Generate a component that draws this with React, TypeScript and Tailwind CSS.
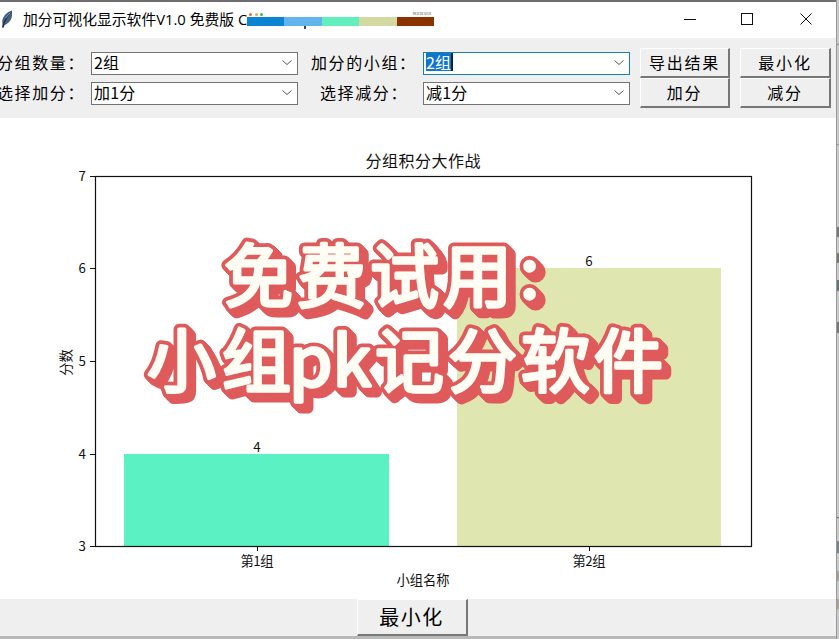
import clsx from "clsx";

const BARS = [
  { name: "第1组", value: 4, x: 124, width: 265, tick: 257, color: "#5cf1c3" },
  { name: "第2组", value: 6, x: 457, width: 264, tick: 589, color: "#dfe6b0" },
];

const TICKS = [7, 6, 5, 4, 3];

const PALETTE = ["bg-[#0b84d2]", "bg-[#61b4ec]", "bg-[#63efbd]", "bg-[#d4d9a2]", "bg-[#8b3302]"];

// chart starts right under the toolbar, so the svg origin sits at y = 118
const yFor = (score: number) => Math.floor(428.6 - (score - 3) * 92.6);

function Feather() {
  return (
    <svg className="h-5 w-3.5 shrink-0" viewBox="0 0 14 20">
      <path d="M12 .5C7 2 2.6 6 2.2 11.5l.3 3-.5 3h1.6l.9-2.3C8.5 13.5 12 9.5 12 5.5Z" fill="#48607f" />
      <path d="M11 2C8 5 5 9 2.7 17.5" stroke="#1c2f4c" strokeWidth="1.2" fill="none" />
      <path d="M10.5 2.5 5.5 8" stroke="#8ea5bf" strokeWidth="1" />
    </svg>
  );
}

function TitleBar() {
  return (
    <header className="relative flex h-[38px] shrink-0 items-center border-t-2 border-[#6f6d6f] bg-white">
      <Feather />
      <h1 className="mb-0.5 ml-[9px] font-['Open_Sans','Noto_Sans_CJK_SC',sans-serif] text-[14.8px] leading-5 whitespace-pre text-black">
        加分可视化显示软件V1.0 免费版 C
      </h1>
      <div className="ml-auto flex items-center pr-[23px] pb-0.5">
        <svg className="h-4 w-[130px]" viewBox="0 0 130 16" fill="none" stroke="#111" shapeRendering="crispEdges">
          <path d="M1 8.5h12" />
          <rect x="58.5" y="2.5" width="11" height="11" />
          <path d="m117.5 2.5 11 11m0-11-11 11" shapeRendering="auto" />
        </svg>
      </div>
      <div className="absolute top-[9px] left-[247px] w-[187px]">
        <div className="flex h-[6px] items-center gap-[2.5px] pl-0.5">
          <i className="h-[3px] w-[3px] rounded-full bg-[#e66b43]" />
          <i className="h-[3px] w-[3px] rounded-full bg-[#e0b040]" />
          <i className="h-[3px] w-[3px] rounded-full bg-[#49b35b]" />
          <span className="mr-[3px] ml-auto text-[3.2px] leading-none text-[#555]">RED DESIGN</span>
        </div>
        <div className="flex h-[9px]">
          {PALETTE.map((color) => (
            <span key={color} className={clsx("flex-1", color)} />
          ))}
        </div>
        <i className="absolute top-[15px] left-[57px] h-[3px] w-[2px] bg-[#1f4d78]" />
      </div>
    </header>
  );
}

function Combo({ value, active }: { value: string; active?: boolean }) {
  return (
    <div
      className={clsx(
        "flex h-[23px] w-[207px] items-center border bg-white pr-1 pl-0.5",
        active ? "border-[#1b7fae]" : "border-[#747474]"
      )}
    >
      <span
        className={clsx(
          "mb-0.5 text-base leading-[18px] tracking-[0.2px]",
          active && "border-r-2 border-[#07264a] bg-[#0f76cc] text-white"
        )}
      >
        {value}
      </span>
      <svg className="ml-auto h-3 w-3" viewBox="0 0 12 12" fill="none" stroke="#555">
        <path d="m1.5 3.5 4.5 4 4.5-4" />
      </svg>
    </div>
  );
}

function TkButton({ label, className }: { label: string; className?: string }) {
  return (
    <button
      className={clsx(
        "flex items-center justify-center border-t border-r-2 border-b-2 border-l border-t-white border-r-[#777] border-b-[#777] border-l-white bg-[#efefef] text-black",
        className
      )}
    >
      {label}
    </button>
  );
}

function Toolbar() {
  const label = "pb-0.5 text-base leading-5 tracking-[1.6px] whitespace-nowrap";
  const button = "h-[30px] pb-0.5 text-base tracking-[1.8px]";
  return (
    <section className="grid h-20 shrink-0 grid-cols-[91px_207px_125px_207px_10px_90px_10px_91px] grid-rows-[30px_30px] items-center bg-[#efefef] pt-[10px]">
      <span className={clsx(label, "-ml-[3px]")}>分组数量：</span>
      <Combo value="2组" />
      <span className={clsx(label, "pl-[13px]")}>加分的小组：</span>
      <Combo value="2组" active />
      <i />
      <TkButton label="导出结果" className={button} />
      <i />
      <TkButton label="最小化" className={button} />
      <span className={clsx(label, "-ml-[3px]")}>选择加分：</span>
      <Combo value="加1分" />
      <span className={clsx(label, "pl-[22px]")}>选择减分：</span>
      <Combo value="减1分" />
      <i />
      <TkButton label="加分" className={button} />
      <i />
      <TkButton label="减分" className={button} />
    </section>
  );
}

function Chart() {
  return (
    <svg className="block h-[481px] w-[836px] shrink-0 bg-white" viewBox="0 0 836 481" fill="#111">
      <text x="423" y="49" fontSize="16" textAnchor="middle" textLength="115">分组积分大作战</text>
      {BARS.map((bar) => (
        <g key={bar.name} fontSize="13.3" textAnchor="middle">
          <rect x={bar.x} y={yFor(bar.value)} width={bar.width} height={428.5 - yFor(bar.value)} fill={bar.color} />
          <path d={`M${bar.tick + 0.5} 428v5`} stroke="#111" />
          <text x={bar.tick} y={yFor(bar.value) - 2}>{bar.value}</text>
          <text x={bar.tick} y="448" textLength="33">{bar.name}</text>
        </g>
      ))}
      {TICKS.map((tick) => (
        <g key={tick}>
          <path d={`M90 ${yFor(tick) + 0.5}h5`} stroke="#111" />
          <text x="86" y={yFor(tick) + 5} fontSize="13.3" textAnchor="end">{tick}</text>
        </g>
      ))}
      <rect x="95.5" y="58.5" width="656" height="370" fill="none" stroke="#111" strokeWidth="1.2" />
      <text x="423" y="467" fontSize="13.3" textAnchor="middle">小组名称</text>
      <text transform="translate(71 244.5) rotate(-90)" fontSize="13.3" textAnchor="middle">分数</text>
    </svg>
  );
}

function HeadlineText() {
  return (
    <>
      <text x="224" y="302" textLength="288">免费试用</text>
      <text x="520" y="298">:</text>
      <text x="147" y="387" textLength="144">小组</text>
      <text x="289" y="386" textLength="82" lengthAdjust="spacingAndGlyphs">pk</text>
      <text x="375" y="387" textLength="288">记分软件</text>
    </>
  );
}

// chained hard shadows turn the red outline into a solid diagonal edge
function Headline() {
  return (
    <svg
      className="pointer-events-none absolute top-0 left-0 h-[639px] w-[839px]"
      viewBox="0 0 839 639"
      fontSize="69"
      fontWeight="400"
      strokeLinejoin="round"
      strokeLinecap="round"
    >
      <g
        className="[filter:drop-shadow(1px_1px_0_#df5b5b)_drop-shadow(2px_2px_0_#df5b5b)_drop-shadow(3px_3px_0_#df5b5b)]"
        fill="#df5b5b"
        stroke="#df5b5b"
        strokeWidth="11"
      >
        <HeadlineText />
      </g>
      <g fill="#fffdf4" stroke="#fffdf4" strokeWidth="3.4">
        <HeadlineText />
      </g>
    </svg>
  );
}

function DesktopEdge() {
  const marks = [
    "mt-[44px] h-px bg-[#888]",
    "mt-[99px] h-px bg-[#999]",
    "mt-[82px] h-[10px] bg-[#777]",
    "mt-[16px] h-[10px] bg-[#77776f]",
    "mt-[17px] h-[11px] bg-[#5f7475]",
    "mt-[31px] h-[11px] bg-[#777]",
    "mt-[184px] h-px bg-[#666]",
    "mt-[23px] h-[12px] bg-[#70858d]",
    "mt-[18px] h-[10px] bg-[#aaa196]",
    "mt-[18px] h-[10px] bg-[#aaa196]",
  ];
  return (
    <aside className="flex w-[3px] flex-col overflow-hidden border-l border-[#999] bg-[#c9c9c9]">
      {marks.map((mark, i) => (
        <i key={i} className={clsx("block w-full shrink-0", mark)} />
      ))}
    </aside>
  );
}

export default function App() {
  return (
    <div className="relative flex h-[639px] w-[839px] overflow-hidden bg-white font-['Noto_Sans_CJK_SC',sans-serif] text-black">
      <main className="flex w-[836px] flex-col">
        <TitleBar />
        <Toolbar />
        <Chart />
        <footer className="flex h-10 shrink-0 items-start justify-center border-b-[3px] border-[#b9b9b9] bg-[#efefef] pr-3">
          <TkButton label="最小化" className="h-[37px] w-[111px] text-[20px] tracking-[1.5px]" />
        </footer>
      </main>
      <DesktopEdge />
      <Headline />
    </div>
  );
}
